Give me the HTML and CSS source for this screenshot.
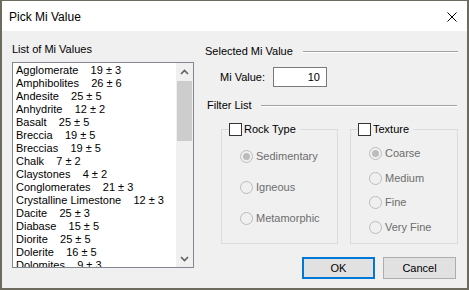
FILE: index.html
```html
<!DOCTYPE html>
<html lang="en">
<head>
  <meta charset="UTF-8">
  <title>Pick Mi Value</title>
  <link rel="stylesheet" href="styles.css">
</head>
<body>
  <div class="window">
    <div class="titlebar">
      <span class="title">Pick Mi Value</span>
      <svg class="close" width="10" height="10" viewBox="0 0 10 10">
        <path d="M0.5 0.5 L9.5 9.5 M9.5 0.5 L0.5 9.5" stroke="#000" stroke-width="1" fill="none"/>
      </svg>
    </div>

    <div class="content">
      <div class="left">
        <div class="label">List of Mi Values</div>
        <div class="listbox">
          <ul class="items">
            <li>Agglomerate    19 ± 3</li>
            <li>Amphibolites    26 ± 6</li>
            <li>Andesite    25 ± 5</li>
            <li>Anhydrite    12 ± 2</li>
            <li>Basalt    25 ± 5</li>
            <li>Breccia    19 ± 5</li>
            <li>Breccias    19 ± 5</li>
            <li>Chalk    7 ± 2</li>
            <li>Claystones    4 ± 2</li>
            <li>Conglomerates    21 ± 3</li>
            <li>Crystalline Limestone    12 ± 3</li>
            <li>Dacite    25 ± 3</li>
            <li>Diabase    15 ± 5</li>
            <li>Diorite    25 ± 5</li>
            <li>Dolerite    16 ± 5</li>
            <li>Dolomites    9 ± 3</li>
          </ul>
          <div class="scrollbar">
            <div class="sb-btn">
              <svg width="9" height="6" viewBox="0 0 9 6"><path d="M1 5 L4.5 1.5 L8 5" stroke="#606060" stroke-width="1.6" fill="none"/></svg>
            </div>
            <div class="sb-track"><div class="sb-thumb"></div></div>
            <div class="sb-btn">
              <svg width="9" height="6" viewBox="0 0 9 6"><path d="M1 1 L4.5 4.5 L8 1" stroke="#606060" stroke-width="1.6" fill="none"/></svg>
            </div>
          </div>
        </div>
      </div>

      <div class="right">
        <div class="section-head">
          <span>Selected Mi Value</span>
          <div class="rule"></div>
        </div>

        <div class="value-row">
          <span class="value-label">Mi Value:</span>
          <div class="textbox">10</div>
        </div>

        <div class="section-head filter">
          <span>Filter List</span>
          <div class="rule"></div>
        </div>

        <div class="groups">
          <fieldset class="group rock">
            <legend><span class="check"></span>Rock Type</legend>
            <div class="options">
              <div class="option"><span class="radio on"></span>Sedimentary</div>
              <div class="option"><span class="radio"></span>Igneous</div>
              <div class="option"><span class="radio"></span>Metamorphic</div>
            </div>
          </fieldset>
          <fieldset class="group texture">
            <legend><span class="check"></span>Texture</legend>
            <div class="options">
              <div class="option"><span class="radio on"></span>Coarse</div>
              <div class="option"><span class="radio"></span>Medium</div>
              <div class="option"><span class="radio"></span>Fine</div>
              <div class="option"><span class="radio"></span>Very Fine</div>
            </div>
          </fieldset>
        </div>

        <div class="buttons">
          <button class="btn default">OK</button>
          <button class="btn">Cancel</button>
        </div>
      </div>
    </div>
  </div>
</body>
</html>
```

FILE: styles.css
```css
body {
  margin: 0;
  background: #6c6b5e;
  font-family: "Liberation Sans", Arial, sans-serif;
  font-size: 11px;
  color: #000;
}

.window {
  margin: 1px 0 0 2px;
  width: 465px;
  height: 287px;
  background: #f0f0f0;
  display: flex;
  flex-direction: column;
}

.titlebar {
  height: 30px;
  background: #fff;
  display: flex;
  align-items: center;
  justify-content: space-between;
  padding: 0 10px 0 7px;
  flex-shrink: 0;
}

.title {
  font-size: 12px;
  margin-top: 1px;
}

.close {
  display: block;
  margin-top: 1px;
}

.content {
  display: flex;
  padding: 12px 8px 0 10px;
  gap: 10px;
}

.left {
  width: 182px;
}

.label {
  line-height: 13px;
  padding-left: 0;
}

.listbox {
  margin-top: 6px;
  height: 206px;
  box-sizing: border-box;
  border: 1px solid #828790;
  background: #fff;
  display: flex;
}

.items {
  flex: 1;
  margin: 0;
  padding: 1px 0 0 3px;
  list-style: none;
  overflow: hidden;
}

.items li {
  line-height: 13px;
  white-space: pre;
}

.scrollbar {
  width: 17px;
  background: #f0f0f0;
  display: flex;
  flex-direction: column;
}

.sb-btn {
  height: 17px;
  display: flex;
  align-items: center;
  justify-content: center;
}

.sb-track {
  flex: 1;
  padding: 1px 1px 0;
}

.sb-thumb {
  height: 60px;
  background: #cdcdcd;
}

.right {
  width: 254px;
  padding-top: 2px;
}

.section-head {
  display: flex;
  align-items: center;
  line-height: 13px;
  padding-left: 1px;
}

.section-head .rule {
  flex: 1;
  margin-left: 10px;
  border-top: 1px solid #a0a0a0;
  border-bottom: 1px solid #fff;
}

.section-head.filter {
  margin-top: 12px;
  padding-left: 3px;
}

.section-head.filter .rule {
  margin-left: 9px;
  margin-right: 1px;
}

.value-row {
  display: flex;
  align-items: center;
  margin-top: 9px;
  padding-left: 16px;
}

.value-label {
  width: 53px;
}

.textbox {
  width: 54px;
  height: 20px;
  box-sizing: border-box;
  border: 1px solid #7a7a7a;
  background: #fff;
  text-align: right;
  padding-right: 6px;
  line-height: 18px;
}

.groups {
  display: flex;
  gap: 12px;
  margin-top: 11px;
  padding-left: 17px;
}

.group {
  margin: 0;
  border: 1px solid #dcdcdc;
  padding: 0 0 0 7px;
  min-width: 0;
  box-sizing: border-box;
}

.rock {
  width: 117px;
}

.texture {
  width: 108px;
}

.group legend {
  display: flex;
  align-items: center;
  gap: 2px;
  padding: 0 4px 0 0;
  line-height: 13px;
}

.check {
  width: 13px;
  height: 13px;
  box-sizing: border-box;
  border: 1px solid #333;
  background: #fff;
}

.options {
  display: flex;
  flex-direction: column;
  margin-left: 11px;
  color: #6d6d6d;
}

.rock .options {
  gap: 18px;
  padding: 14px 0 17px;
}

.texture .options {
  gap: 11.5px;
  padding: 11px 0 9px;
}

.option {
  display: flex;
  align-items: center;
  gap: 3px;
  line-height: 13px;
}

.radio {
  width: 13px;
  height: 13px;
  box-sizing: border-box;
  border: 1px solid #bcbcbc;
  border-radius: 50%;
  background: #f0f0f0;
  display: flex;
  align-items: center;
  justify-content: center;
}

.radio.on::after {
  content: "";
  width: 7px;
  height: 7px;
  border-radius: 50%;
  background: #bcbcbc;
}

.buttons {
  display: flex;
  justify-content: flex-end;
  gap: 8px;
  margin-top: 13px;
  padding-right: 2px;
}

.btn {
  width: 73px;
  height: 22px;
  box-sizing: border-box;
  border: 1px solid #adadad;
  background: #e1e1e1;
  font-family: "Liberation Sans", Arial, sans-serif;
  font-size: 11px;
  color: #000;
  padding: 0;
}

.btn.default {
  border: 2px solid #0078d7;
}
```
